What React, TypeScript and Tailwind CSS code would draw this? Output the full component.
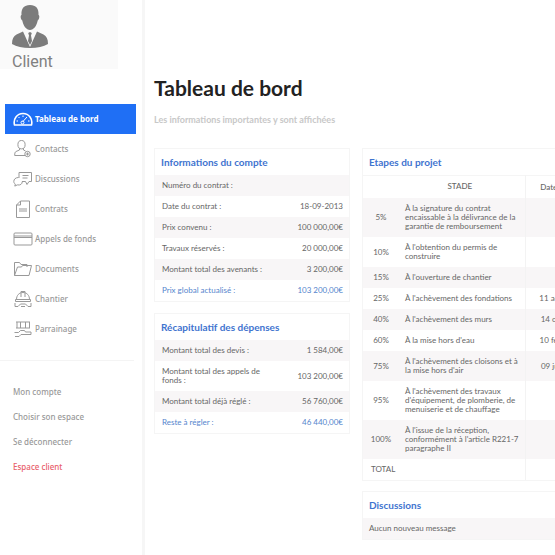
import type { ReactNode } from 'react'

interface MenuEntry {
  label: string
  icon: ReactNode
  active?: boolean
}

interface AmountRow {
  label: string
  value: string
  highlight?: boolean
}

const menu: MenuEntry[] = [
  {
    label: 'Tableau de bord',
    active: true,
    icon: (
      <>
        <path d="M1.500 16h17c1.500-6-2.500-11.500-8.500-11.500S0 10 1.500 16Z" strokeWidth="1.600" />
        <path d="M9.500 13 14 8M3.500 12H5M5.500 8l1 1M10 6.500V8M15 12h1.500" />
        <circle cx="9.500" cy="13.500" r="1.500" />
      </>
    ),
  },
  {
    label: 'Contacts',
    icon: (
      <>
        <ellipse cx="8.500" cy="5.700" rx="3.600" ry="4.200" />
        <path d="M6.500 9.500v1.500L3 12.500c-1 .6-1.300 1.600-1.300 4H12M10.500 9.500V11l2 1" />
        <circle cx="14.500" cy="15" r="2.700" />
        <path d="M14.500 13.500v3M13 15h3" />
      </>
    ),
  },
  {
    label: 'Discussions',
    icon: (
      <>
        <path d="M6 3.500h12.500v9h-2.500l-2 3-1.500-3H9M6 3.500V9" />
        <path d="M9.500 6.500h6M9.500 9h5" />
        <path d="M5.500 8.500C2.500 8.500.8 10.300.8 12.500c0 1.200.6 2 1.500 2.600l-.5 2 2.500-1.200c3 .6 5-.8 5-3.400" />
      </>
    ),
  },
  {
    label: 'Contrats',
    icon: (
      <>
        <path d="M7.500 2h9v16.500h-13V6l4-4Z" />
        <path d="M7.500 2v4h-4M6 10h8M6 12h8" />
      </>
    ),
  },
  {
    label: 'Appels de fonds',
    icon: (
      <>
        <rect x="1" y="4" width="18" height="12" rx="1" />
        <path d="M1 7h18M1 8.500h18" />
      </>
    ),
  },
  {
    label: 'Documents',
    icon: (
      <>
        <path d="M1.500 16.500v-13h5l1.500 2h6v2.500" />
        <path d="m1.500 16.500 3-8.500h4l1-1.500h9l-2.500 10h-14.500Z" />
      </>
    ),
  },
  {
    label: 'Chantier',
    icon: (
      <>
        <path d="M3.500 10.500c0-4 2.500-7 6.500-7s6.500 3 6.500 7" />
        <path d="M8 8V2.500h4V8M2.500 10.500h15v2h-15z" />
        <path d="M2 14v3.500h3L7.500 15h5l2.500 2.500h3V14M8 17.500h4" />
      </>
    ),
  },
  {
    label: 'Parrainage',
    icon: (
      <>
        <path d="M4 3v6M7.500 3v6M12.500 3v6M16.500 3v6M3 3h14M3 9h14" />
        <path d="M1.500 13.500h4l2-2h4l1 1.500h5.500v2.500h-10l-2 2H2" />
      </>
    ),
  },
]

const accountLinks = ['Mon compte', 'Choisir son espace', 'Se déconnecter']

const accountRows: AmountRow[] = [
  { label: 'Numéro du contrat :', value: '' },
  { label: 'Date du contrat :', value: '18-09-2013' },
  { label: 'Prix convenu :', value: '100 000,00€' },
  { label: 'Travaux réservés :', value: '20 000,00€' },
  { label: 'Montant total des avenants :', value: '3 200,00€' },
  { label: 'Prix global actualisé :', value: '103 200,00€', highlight: true },
]

const expenseRows: AmountRow[] = [
  { label: 'Montant total des devis :', value: '1 584,00€' },
  { label: 'Montant total des appels de fonds :', value: '103 200,00€' },
  { label: 'Montant total déjà réglé :', value: '56 760,00€' },
  { label: 'Reste à régler :', value: '46 440,00€', highlight: true },
]

const stages = [
  { percent: '5%', label: 'À la signature du contrat encaissable à la délivrance de la garantie de remboursement', date: '' },
  { percent: '10%', label: "À l'obtention du permis de construire", date: '' },
  { percent: '15%', label: "À l'ouverture de chantier", date: '' },
  { percent: '25%', label: "À l'achèvement des fondations", date: '11 août 2014' },
  { percent: '40%', label: "À l'achèvement des murs", date: '14 oct. 2014' },
  { percent: '60%', label: "À la mise hors d'eau", date: '10 févr. 2015' },
  { percent: '75%', label: "À l'achèvement des cloisons et à la mise hors d'air", date: '09 juin 2015' },
  { percent: '95%', label: "À l'achèvement des travaux d'équipement, de plomberie, de menuiserie et de chauffage", date: '' },
  { percent: '100%', label: "À l'issue de la réception, conformément à l'article R221-7 paragraphe II", date: '' },
]

function Card({ title, children }: { title: string; children: ReactNode }) {
  return (
    <section className="border border-[#f5f5f5] bg-white">
      <h2 className="px-1.5 py-1.5 text-[10px] leading-[14px] font-bold text-[#3f74cf]">{title}</h2>
      {children}
    </section>
  )
}

function AmountTable({ rows }: { rows: AmountRow[] }) {
  return (
    <table className="w-full text-[8px] leading-[9px]">
      <tbody>
        {rows.map((row) => (
          <tr
            key={row.label}
            className={`odd:bg-[#f8f6f7] ${row.highlight ? 'text-[#5585cd]' : 'text-[#666]'}`}
          >
            <th scope="row" className="w-28 py-1.5 pl-[7px] text-left font-normal">
              {row.label}
            </th>
            <td className="py-1.5 pr-1.5 text-right whitespace-nowrap">{row.value}</td>
          </tr>
        ))}
      </tbody>
    </table>
  )
}

function Sidebar() {
  return (
    <aside className="w-[145px] shrink-0 border-r-3 border-[#f6f6f6] font-['Noto_Sans',sans-serif]">
      <div className="mr-6 h-[69px] bg-[#fafafa] pt-[5px] pl-3">
        <svg viewBox="0 0 36 43" className="h-[43px] w-9" fill="#7c7c7c">
          <path d="M18 0c6 0 9 3.500 8.500 10 1.500.5.800 4.500-.8 5.500-.8 5-4 9.500-7.700 9.500s-6.900-4.500-7.700-9.500c-1.600-1-2.300-5-.8-5.500C9 3.500 12 0 18 0Z" />
          <path d="M11 26.500 18 42l7-15.500 6.500 3c3 1.500 4.500 4.500 4.500 9.500-4.500 2.700-10.500 4-18 4S4.500 41.700 0 39c0-5 1.500-8 4.500-9.500l6.500-3Z" />
          <path d="m12 26 6 13.500L24 26l-6 3-6-3Z" fill="#fafafa" />
          <path d="m16.200 28 1.800-1 1.800 1-.8 2.500 1 5.500-2 4-2-4 1-5.500-.8-2.500Z" />
        </svg>
        <p className="mt-1 font-[Roboto,sans-serif] text-base leading-[20px] text-[#808080]">Client</p>
      </div>

      <nav aria-label="Menu principal" className="mt-[35px] mr-1.5 ml-[5px]">
        {menu.map((entry) => (
          <a
            key={entry.label}
            href="#"
            className={`flex h-[30px] items-center gap-0.5 pl-2 text-[8px] leading-[10px] ${
              entry.active ? 'bg-[#1f6ff5] font-bold text-white' : 'font-medium text-[#999]'
            }`}
          >
            <svg
              viewBox="0 0 20 20"
              className="size-5"
              fill="none"
              stroke="currentColor"
              strokeWidth="1"
              strokeLinejoin="round"
            >
              {entry.icon}
            </svg>
            {entry.label}
          </a>
        ))}
      </nav>

      <div className="mt-4 mr-2 border-t border-[#f4f4f4] pt-[18px] pl-[13px] text-[8px] leading-[25px] font-medium text-[#999]">
        {accountLinks.map((label) => (
          <a key={label} href="#" className="block">
            {label}
          </a>
        ))}
        <a href="#" className="block text-[#e8606b]">
          Espace client
        </a>
      </div>
    </aside>
  )
}

export default function App() {
  return (
    <div className="flex min-h-screen overflow-hidden bg-white font-[Lato,sans-serif]">
      <Sidebar />
      <main className="min-w-0 flex-1 overflow-hidden pt-[74px] pl-[9px]">
        <h1 className="text-[21px] leading-[28px] font-bold text-[#222]">Tableau de bord</h1>
        <p className="mt-3 text-[9px] leading-[12px] font-bold text-[#c8c8c8]">
          Les informations importantes y sont affichées
        </p>

        <div className="mt-[22px] flex items-start gap-3">
          <div className="flex w-49 shrink-0 flex-col gap-[11px]">
            <Card title="Informations du compte">
              <AmountTable rows={accountRows} />
            </Card>
            <Card title="Récapitulatif des dépenses">
              <AmountTable rows={expenseRows} />
            </Card>
          </div>

          <div className="flex w-60 shrink-0 flex-col gap-2.5">
            <Card title="Etapes du projet">
              <table className="w-full table-fixed border-t border-[#f5f5f5] text-[8px] leading-[9px] text-[#666]">
                <colgroup>
                  <col className="w-9" />
                  <col className="w-[126px]" />
                  <col />
                </colgroup>
                <thead>
                  <tr>
                    <th colSpan={2} className="pt-1.5 pb-[7px] pl-8 font-medium">
                      STADE
                    </th>
                    <th className="border-l border-[#f3f3f3] font-medium">Date réalisée</th>
                  </tr>
                </thead>
                <tbody>
                  {stages.map((stage) => (
                    <tr key={stage.percent} className="odd:bg-[#f8f6f7]">
                      <td className="py-1.5 text-center">{stage.percent}</td>
                      <td className="py-1.5 pr-1 pl-1.5">{stage.label}</td>
                      <td className="border-l border-[#f3f3f3] text-center">{stage.date}</td>
                    </tr>
                  ))}
                </tbody>
                <tfoot>
                  <tr>
                    <td colSpan={2} className="py-1.5 pl-2">
                      TOTAL
                    </td>
                    <td className="border-l border-[#f3f3f3]" />
                  </tr>
                </tfoot>
              </table>
            </Card>
            <Card title="Discussions">
              <p className="bg-[#f8f6f7] px-1.5 py-1.5 text-[8px] leading-[9px] text-[#666]">
                Aucun nouveau message
              </p>
            </Card>
          </div>
        </div>
      </main>
    </div>
  )
}
